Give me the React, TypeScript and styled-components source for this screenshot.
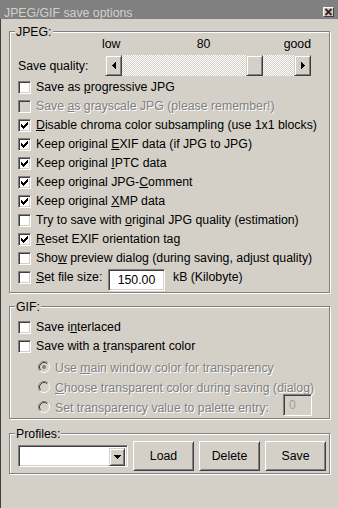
import React from "react";
import styled, { createGlobalStyle } from "styled-components";

const FACE = "#d4d0c8";
const SHADOW = "#808080";
const DARK = "#404040";
const HI = "#ffffff";

const GlobalStyle = createGlobalStyle`
  html, body { margin: 0; padding: 0; background: ${FACE}; }
  body { font-family: "Liberation Sans", Arial, sans-serif; font-size: 12.3px; color: #000; }
  *, *::before, *::after { box-sizing: border-box; }
`;

const Window = styled.div`
  width: 338px;
  height: 508px;
  display: flex;
  flex-direction: column;
  background: ${FACE};
  overflow: hidden;
`;

const TitleBar = styled.div`
  flex: none;
  height: 19px;
  padding: 6px 4px 0 4px;
  background: #808080;
  color: ${FACE};
  display: flex;
  justify-content: space-between;
  align-items: flex-start;
  line-height: 14px;
  white-space: nowrap;
`;

const CloseBtn = styled.span`
  width: 11px;
  height: 10px;
  margin-top: 1px;
  display: flex;
  align-items: center;
  justify-content: center;
  background: ${FACE};
  border: 1px solid;
  border-color: ${HI} ${DARK} ${DARK} ${HI};
`;

const Body = styled.div`
  flex: 1;
  border-left: 1px solid ${DARK};
  padding: 12px 0 0 8px;
  display: flex;
  flex-direction: column;
`;

const Group = styled.div<{ $mt?: number; $pt: number; $pb: number }>`
  position: relative;
  width: 321px;
  margin-top: ${(p) => p.$mt ?? 0}px;
  padding: ${(p) => p.$pt}px 0 ${(p) => p.$pb}px 8px;
  border: 1px solid ${SHADOW};
  box-shadow: inset 1px 1px 0 ${HI}, 1px 1px 0 ${HI};
  display: flex;
  flex-direction: column;
`;

const Legend = styled.span`
  position: absolute;
  top: -7px;
  left: 5px;
  padding: 0 1px;
  line-height: 14px;
  background: ${FACE};
`;

const ScaleRow = styled.div`
  margin-left: 84px;
  width: 209px;
  height: 14px;
  line-height: 14px;
  display: flex;
  justify-content: space-between;
`;

const ScaleMid = styled.span`
  margin-left: 3px;
`;

const SliderRow = styled.div`
  margin-top: 4px;
  margin-bottom: 2px;
  height: 21px;
  display: flex;
  align-items: center;
`;

const SliderLabel = styled.span`
  width: 87px;
  white-space: nowrap;
`;

const ScrollBar = styled.div`
  width: 206px;
  height: 21px;
  display: flex;
`;

const raised = `
  border: 1px solid;
  border-color: ${FACE} ${DARK} ${DARK} ${FACE};
  box-shadow: inset 1px 1px 0 ${HI}, inset -1px -1px 0 ${SHADOW};
  background: ${FACE};
`;

const ScrollBtn = styled.div`
  flex: none;
  width: 17px;
  height: 21px;
  ${raised}
  display: flex;
  align-items: center;
  justify-content: center;
`;

const Track = styled.div`
  flex: 1;
  display: flex;
  background-color: ${FACE};
  background-image: repeating-conic-gradient(${HI} 0% 25%, ${FACE} 0% 50%);
  background-size: 2px 2px;
`;

const Thumb = styled.div`
  flex: none;
  width: 17px;
  height: 21px;
  ${raised}
`;

const Row = styled.div<{ $indent?: number; $mt?: number; $h?: number }>`
  display: flex;
  align-items: flex-start;
  min-height: ${(p) => p.$h ?? 19}px;
  line-height: ${(p) => p.$h ?? 19}px;
  padding-left: ${(p) => p.$indent ?? 0}px;
  margin-top: ${(p) => p.$mt ?? 0}px;
`;

const Box = styled.span<{ $disabled?: boolean }>`
  flex: none;
  width: 13px;
  height: 13px;
  margin-top: 3px;
  margin-right: 5px;
  padding: 1px;
  border: 1px solid;
  border-color: ${SHADOW} ${HI} ${HI} ${SHADOW};
  box-shadow: inset 1px 1px 0 ${DARK}, inset -1px -1px 0 ${FACE};
  background: ${(p) => (p.$disabled ? FACE : HI)};
  display: flex;
`;

const RadioSvg = styled.svg`
  flex: none;
  margin-top: 2px;
  margin-right: 5px;
`;

const Label = styled.span<{ $disabled?: boolean; $clip?: number; $w?: number }>`
  white-space: nowrap;
  color: ${(p) => (p.$disabled ? SHADOW : "#000")};
  text-shadow: ${(p) => (p.$disabled ? `1px 1px 0 ${HI}` : "none")};
  ${(p) => (p.$clip ? `width: ${p.$clip}px; overflow: hidden;` : "")}
  ${(p) => (p.$w ? `width: ${p.$w}px; flex: none;` : "")}
  u { text-underline-offset: 1px; }
`;

const sunken = `
  border: 1px solid;
  border-color: ${SHADOW} ${HI} ${HI} ${SHADOW};
  box-shadow: inset 1px 1px 0 ${DARK}, inset -1px -1px 0 ${FACE};
`;

const Field = styled.div<{ $w: number; $disabled?: boolean; $center?: boolean; $mt: number; $ml?: string; $mr?: number }>`
  flex: none;
  width: ${(p) => p.$w}px;
  height: 22px;
  margin-top: ${(p) => p.$mt}px;
  margin-left: ${(p) => p.$ml ?? "0"};
  margin-right: ${(p) => p.$mr ?? 0}px;
  ${sunken}
  background: ${(p) => (p.$disabled ? FACE : HI)};
  color: ${(p) => (p.$disabled ? "#a0a0a0" : "#000")};
  line-height: 20px;
  text-align: ${(p) => (p.$center ? "center" : "left")};
  padding-left: ${(p) => (p.$center ? 0 : 5)}px;
`;

const Unit = styled.span`
  margin-left: 8px;
  white-space: nowrap;
`;

const ProfileRow = styled.div`
  display: flex;
  align-items: center;
  gap: 5px;
`;

const Combo = styled.div`
  width: 110px;
  height: 22px;
  ${sunken}
  background: ${HI};
  padding: 2px;
  display: flex;
  justify-content: flex-end;
`;

const ComboBtn = styled.div`
  width: 16px;
  height: 18px;
  ${raised}
  display: flex;
  align-items: center;
  justify-content: center;
`;

const PushButton = styled.button`
  width: 61px;
  height: 30px;
  padding: 0;
  font: inherit;
  color: #000;
  border: 1px solid;
  border-color: ${HI} ${DARK} ${DARK} ${HI};
  box-shadow: inset 1px 1px 0 ${FACE}, inset -1px -1px 0 ${SHADOW};
  background: ${FACE};
`;

const CheckMark = () => (
  <svg width="9" height="9" viewBox="0 0 9 9" shapeRendering="crispEdges">
    {[2, 3, 4, 3, 2, 1, 0].map((dy, i) => (
      <rect key={i} x={1 + i} y={1 + dy} width={1} height={3} fill="#000" />
    ))}
  </svg>
);

const Check: React.FC<{ checked?: boolean; disabled?: boolean }> = ({ checked, disabled }) => (
  <Box $disabled={disabled}>{checked ? <CheckMark /> : null}</Box>
);

const Radio: React.FC<{ checked?: boolean }> = ({ checked }) => (
  <RadioSvg width="12" height="12" viewBox="0 0 12 12">
    <circle cx="6" cy="6" r="5" fill={FACE} />
    <path d="M2.11 9.89 A5.5 5.5 0 0 1 9.89 2.11" stroke={SHADOW} fill="none" />
    <path d="M9.89 2.11 A5.5 5.5 0 0 1 2.11 9.89" stroke={HI} fill="none" />
    <path d="M2.82 9.18 A4.5 4.5 0 0 1 9.18 2.82" stroke={DARK} fill="none" />
    <path d="M9.18 2.82 A4.5 4.5 0 0 1 2.82 9.18" stroke={FACE} fill="none" />
    {checked ? <circle cx="6" cy="6" r="2" fill={SHADOW} /> : null}
  </RadioSvg>
);

const ArrowLeft = () => (
  <svg width="4" height="7" viewBox="0 0 4 7" shapeRendering="crispEdges">
    <path d="M4 0 L0 3.5 L4 7 Z" fill="#000" />
  </svg>
);

const ArrowRight = () => (
  <svg width="4" height="7" viewBox="0 0 4 7" shapeRendering="crispEdges">
    <path d="M0 0 L4 3.5 L0 7 Z" fill="#000" />
  </svg>
);

const ArrowDown = () => (
  <svg width="7" height="4" viewBox="0 0 7 4" shapeRendering="crispEdges">
    <path d="M0 0 H7 L3.5 4 Z" fill="#000" />
  </svg>
);

const CloseGlyph = () => (
  <svg width="9" height="8" viewBox="0 0 9 8">
    <path d="M1.5 1 L7.5 7 M7.5 1 L1.5 7" stroke="#d08838" strokeWidth="2.6" />
    <path d="M1.5 1 L7.5 7 M7.5 1 L1.5 7" stroke="#101a5a" strokeWidth="1.5" />
  </svg>
);

const quality = 80;
const trackFree = 206 - 34 - 17;

export default function App() {
  return (
    <>
      <GlobalStyle />
      <Window>
        <TitleBar>
          <span>JPEG/GIF save options</span>
          <CloseBtn>
            <CloseGlyph />
          </CloseBtn>
        </TitleBar>
        <Body>
          <Group $pt={5} $pb={1}>
            <Legend>JPEG:</Legend>
            <ScaleRow>
              <span>low</span>
              <ScaleMid>{quality}</ScaleMid>
              <span>good</span>
            </ScaleRow>
            <SliderRow>
              <SliderLabel>Save quality:</SliderLabel>
              <ScrollBar>
                <ScrollBtn>
                  <ArrowLeft />
                </ScrollBtn>
                <Track>
                  <Thumb style={{ marginLeft: Math.round((trackFree * quality) / 100) }} />
                </Track>
                <ScrollBtn>
                  <ArrowRight />
                </ScrollBtn>
              </ScrollBar>
            </SliderRow>
            <Row>
              <Check />
              <Label>Save as <u>p</u>rogressive JPG</Label>
            </Row>
            <Row>
              <Check disabled />
              <Label $disabled $clip={238}>Save <u>a</u>s grayscale JPG (please remember!)</Label>
            </Row>
            <Row>
              <Check checked />
              <Label><u>D</u>isable chroma color subsampling (use 1x1 blocks)</Label>
            </Row>
            <Row>
              <Check checked />
              <Label>Keep original <u>E</u>XIF data (if JPG to JPG)</Label>
            </Row>
            <Row>
              <Check checked />
              <Label>Keep original <u>I</u>PTC data</Label>
            </Row>
            <Row>
              <Check checked />
              <Label>Keep original JPG-<u>C</u>omment</Label>
            </Row>
            <Row>
              <Check checked />
              <Label>Keep original <u>X</u>MP data</Label>
            </Row>
            <Row>
              <Check />
              <Label>Try to save with <u>o</u>riginal JPG quality (estimation)</Label>
            </Row>
            <Row>
              <Check checked />
              <Label><u>R</u>eset EXIF orientation tag</Label>
            </Row>
            <Row>
              <Check />
              <Label>Sho<u>w</u> preview dialog (during saving, adjust quality)</Label>
            </Row>
            <Row>
              <Check />
              <Label $w={72}><u>S</u>et file size:</Label>
              <Field $w={57} $mt={1} $center>150.00</Field>
              <Unit>kB (Kilobyte)</Unit>
            </Row>
          </Group>

          <Group $mt={13} $pt={11} $pb={0}>
            <Legend>GIF:</Legend>
            <Row>
              <Check />
              <Label>Save i<u>n</u>terlaced</Label>
            </Row>
            <Row>
              <Check />
              <Label>Save with a <u>t</u>ransparent color</Label>
            </Row>
            <Row $indent={20} $mt={3}>
              <Radio checked />
              <Label $disabled $clip={219}>Use <u>m</u>ain window color for transparency</Label>
            </Row>
            <Row $indent={20} $mt={1}>
              <Radio />
              <Label $disabled $clip={261}><u>C</u>hoose transparent color during saving (dialog)</Label>
            </Row>
            <Row $indent={20} $mt={1}>
              <Radio />
              <Label $disabled>Set transparency value to palette entry:</Label>
              <Field $w={29} $mt={-5} $ml="auto" $mr={17} $disabled>0</Field>
            </Row>
          </Group>

          <Group $mt={14} $pt={7} $pb={2}>
            <Legend>Profiles:</Legend>
            <ProfileRow>
              <Combo>
                <ComboBtn>
                  <ArrowDown />
                </ComboBtn>
              </Combo>
              <PushButton>Load</PushButton>
              <PushButton>Delete</PushButton>
              <PushButton>Save</PushButton>
            </ProfileRow>
          </Group>
        </Body>
      </Window>
    </>
  );
}
